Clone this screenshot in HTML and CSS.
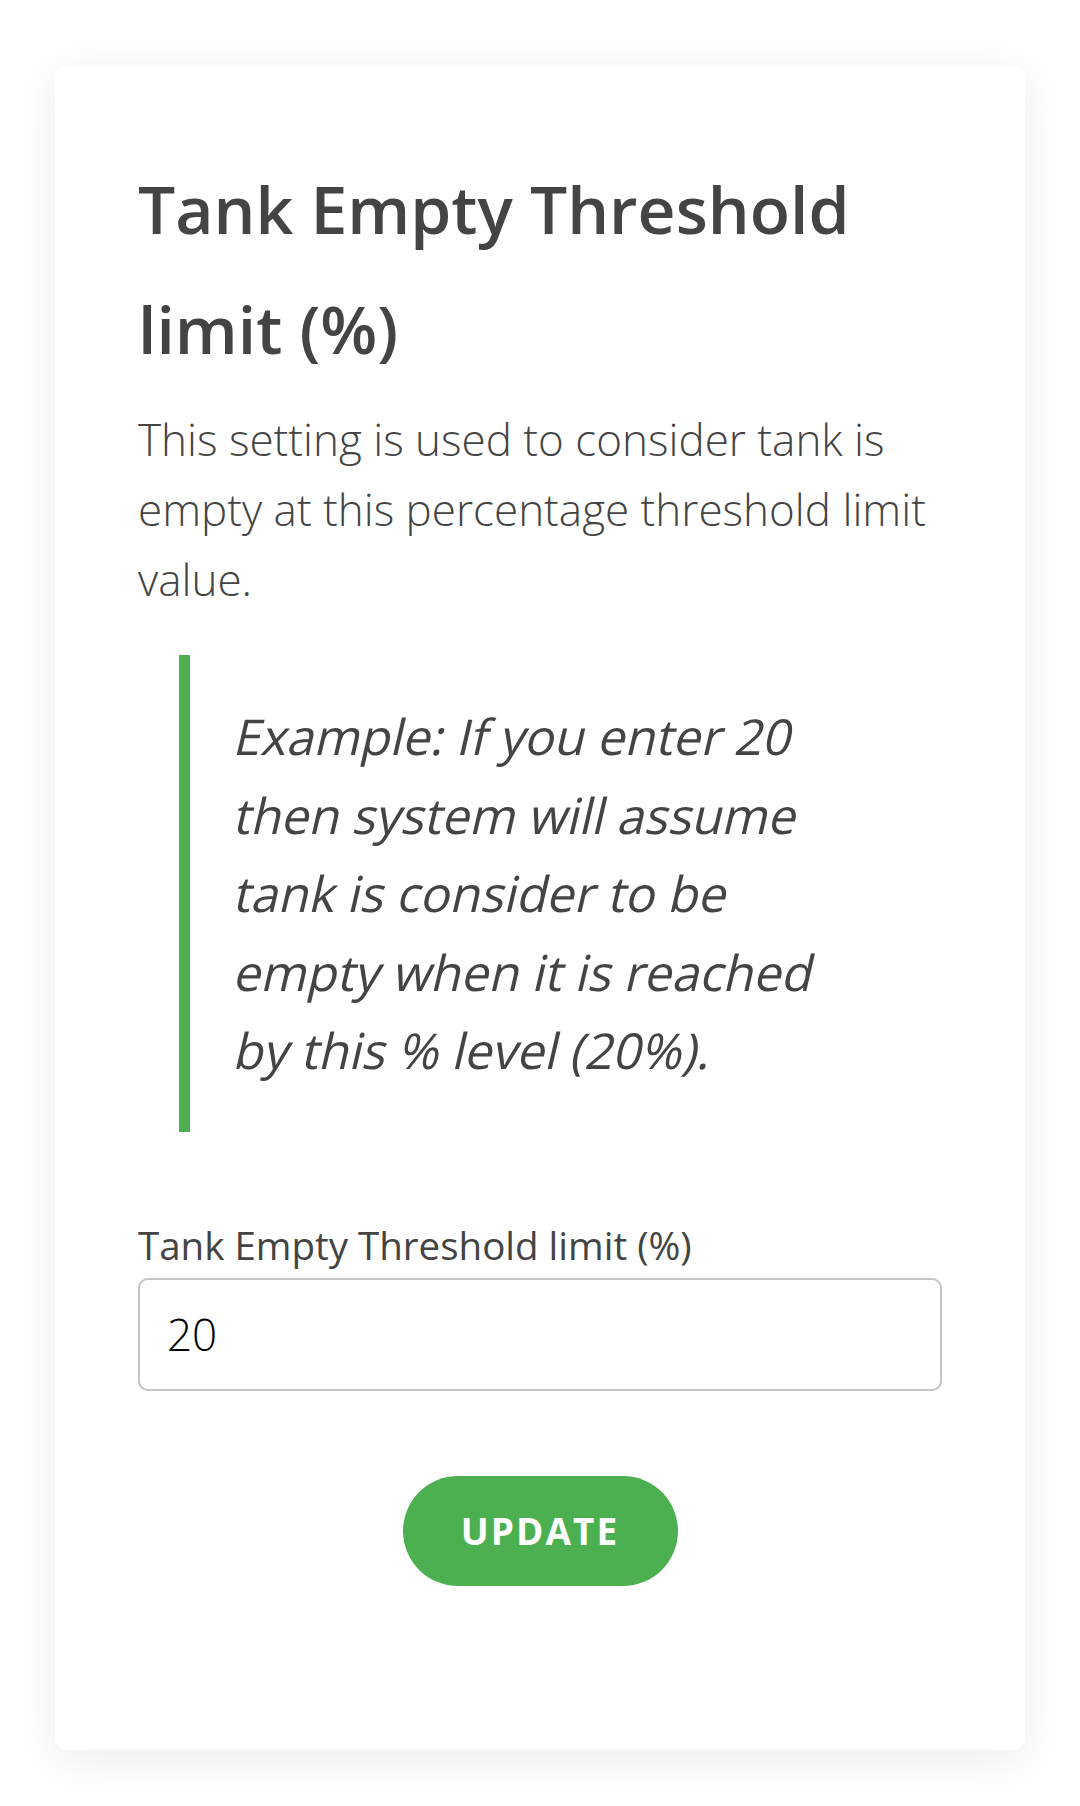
FILE: index.html
```html
<!DOCTYPE html>
<html lang="en">
<head>
<meta charset="utf-8">
<title>Tank Empty Threshold limit</title>
<link rel="stylesheet" href="styles.css">
</head>
<body>
<div class="page">
  <section class="card">
    <h1 class="title">Tank Empty Threshold limit (%)</h1>
    <p class="desc">This setting is used to consider tank is empty at this percentage threshold limit value.</p>
    <blockquote class="example">
      <span class="line">Example: If you enter 20</span>
      <span class="line">then system will assume</span>
      <span class="line">tank is consider to be</span>
      <span class="line">empty when it is reached</span>
      <span class="line">by this % level (20%).</span>
    </blockquote>
    <form class="form">
      <label class="label" for="limit">Tank Empty Threshold limit (%)</label>
      <input class="input" id="limit" type="text" value="20">
      <div class="actions">
        <button class="btn" type="button">UPDATE</button>
      </div>
    </form>
  </section>
</div>
</body>
</html>
```

FILE: styles.css
```css
html, body {
  margin: 0;
  padding: 0;
  background: #ffffff;
}

body {
  font-family: "Open Sans", "Noto Sans", sans-serif;
  color: #444444;
}

.page {
  padding: 65px 55px 57px;
}

.card {
  background: #ffffff;
  border-radius: 12px;
  box-shadow: 0 10px 50px rgba(0, 0, 0, 0.08);
  padding: 83px 83px 164px;
}

.title {
  margin: 0 0 16px;
  font-size: 66px;
  line-height: 120px;
  font-weight: 600;
  color: #444444;
}

.desc {
  margin: 0 0 41px;
  font-size: 44px;
  line-height: 70px;
  font-weight: 300;
  color: #444444;
}

.example {
  margin: 0 41px 87px 41px;
  border-left: 11px solid #4caf50;
  padding: 42px 30px 42px 42px;
  font-size: 49.5px;
  line-height: 78.5px;
  font-weight: 400;
  color: #444444;
}

.line {
  display: block;
  white-space: nowrap;
  transform: skewX(-13deg);
  transform-origin: 0 58px;
}

.form {
  margin: 0;
}

.label {
  display: block;
  margin-bottom: 7px;
  font-size: 38.5px;
  line-height: 52px;
  font-weight: 400;
  color: #444444;
}

.input {
  display: block;
  box-sizing: border-box;
  width: 100%;
  height: 113px;
  margin: 0;
  padding: 0 27px;
  border: 2px solid #c4c4c4;
  border-radius: 10px;
  background: #ffffff;
  font-family: "Open Sans", sans-serif;
  font-size: 44px;
  font-weight: 300;
  color: #000000;
  outline: none;
}

.actions {
  margin-top: 85px;
  display: flex;
  justify-content: center;
}

.btn {
  width: 275px;
  height: 110px;
  border: none;
  border-radius: 55px;
  background: #4caf50;
  color: #ffffff;
  font-family: "Open Sans", sans-serif;
  font-size: 37px;
  font-weight: 700;
  letter-spacing: 2px;
  padding: 0;
  cursor: pointer;
}
```
